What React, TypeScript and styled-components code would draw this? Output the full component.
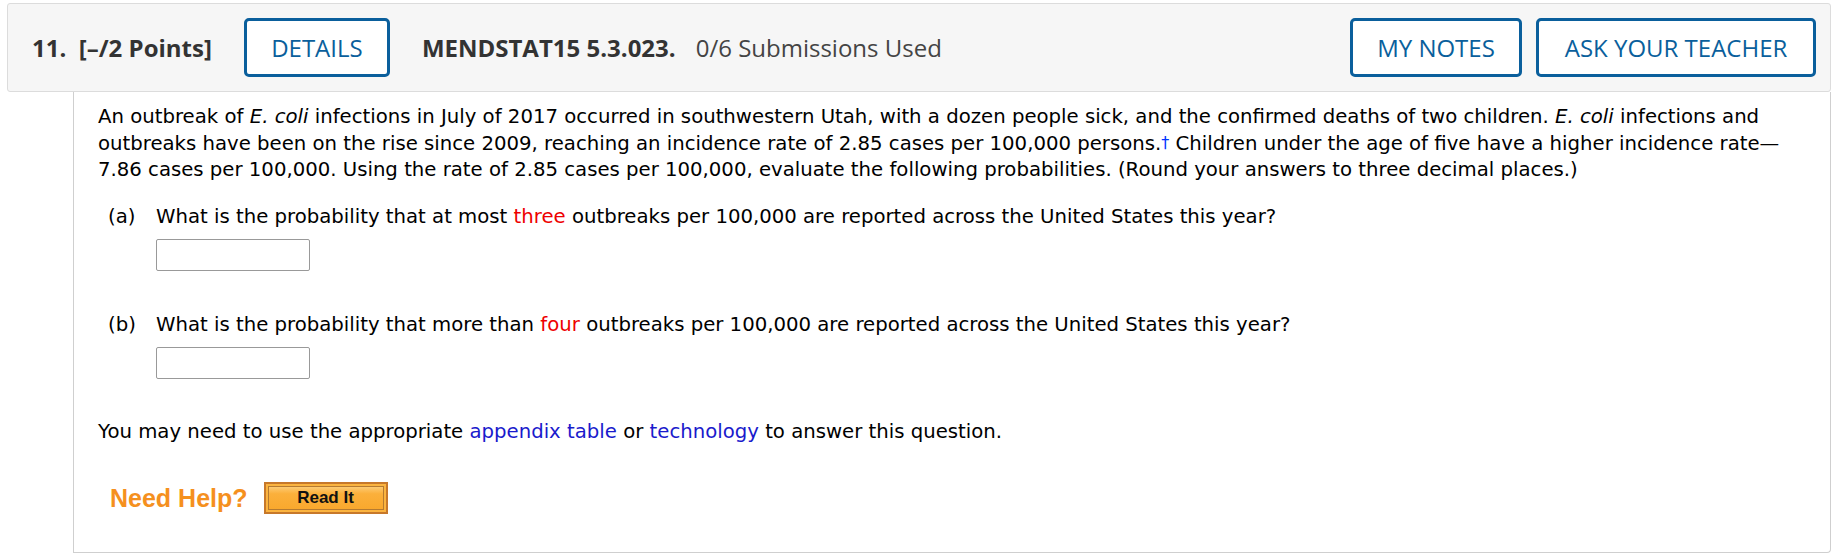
import styled, { createGlobalStyle } from 'styled-components';

const GlobalStyle = createGlobalStyle`
  body {
    margin: 0;
    background: #fff;
  }
`;

const Page = styled.div`
  padding: 3px 8px 0 7px;
`;

const Header = styled.div`
  display: flex;
  align-items: center;
  height: 87px;
  padding: 0 14px 0 24px;
  background-color: #f6f6f6;
  border: 1px solid #dcdcdc;
  border-radius: 3px;
  font-family: "Open Sans", sans-serif;
  font-size: 24px;
  color: #333;
`;

const Number = styled.span`
  font-weight: 700;
  white-space: pre;
`;

const Code = styled.span`
  font-weight: 700;
  margin-right: 20px;
`;

const Used = styled.span`
  font-weight: 400;
  color: #444;
`;

const Spacer = styled.div`
  flex: 1;
`;

const HeaderButton = styled.button<{ $width: number; $gap?: number }>`
  width: ${({ $width }) => $width}px;
  height: 59px;
  margin: 0 ${({ $gap }) => $gap ?? 0}px;
  background: #fff;
  border: 3px solid #0a5f9c;
  border-radius: 5px;
  color: #0a5f9c;
  font-family: "Open Sans", sans-serif;
  font-size: 24px;
  font-weight: 500;
  padding: 0;
  cursor: pointer;
`;

const Body = styled.div`
  margin-left: 66px;
  padding: 12px 38px 38px 24px;
  border-left: 1px solid #cfcfcf;
  border-right: 1px solid #cfcfcf;
  border-bottom: 1px solid #cfcfcf;
  border-bottom-right-radius: 4px;
  font-family: Verdana, "DejaVu Sans", sans-serif;
  font-size: 19.7px;
  line-height: 26px;
  color: #000;
`;

const Para = styled.p`
  margin: 0;
`;

const NoWrap = styled.span`
  white-space: nowrap;
`;

const Dagger = styled.span`
  color: #0033ff;
  font-size: 16px;
  vertical-align: 2px;
`;

const Red = styled.span`
  color: #ee0000;
`;

const Link = styled.a`
  color: #1a1acc;
  text-decoration: none;
`;

const Part = styled.div<{ $top: number }>`
  display: grid;
  grid-template-columns: 48px 1fr;
  margin-top: ${({ $top }) => $top}px;
  padding-left: 10px;
`;

const Label = styled.span``;

const Answer = styled.input`
  display: block;
  box-sizing: border-box;
  width: 154px;
  height: 32px;
  margin-top: 9px;
  border: 1px solid #999;
  border-radius: 2px;
  background: #fff;
`;

const Note = styled.p`
  margin: 40px 0 0 0;
`;

const HelpRow = styled.div`
  display: flex;
  align-items: center;
  margin-top: 37px;
  padding-left: 12px;
`;

const HelpText = styled.span`
  font-family: "Liberation Sans", Arial, sans-serif;
  font-size: 25px;
  line-height: 32px;
  font-weight: 700;
  color: #f5901e;
  margin-right: 16px;
`;

const ReadIt = styled.button`
  width: 124px;
  height: 32px;
  padding: 0;
  border: 2px solid #c7782a;
  background: linear-gradient(#fed58a, #fbb03b 35%, #f9a72b);
  box-shadow: inset 0 0 0 2px #fbb440, inset 0 0 0 3px #b57a30;
  font-family: "Liberation Sans", Arial, sans-serif;
  font-size: 17px;
  font-weight: 700;
  color: #111;
  cursor: pointer;
`;

export default function App() {
  return (
    <Page>
      <GlobalStyle />
      <Header>
        <Number>{'11.  [–/2 Points]'}</Number>
        <HeaderButton $width={146} $gap={32}>DETAILS</HeaderButton>
        <Code>MENDSTAT15 5.3.023.</Code>
        <Used>0/6 Submissions Used</Used>
        <Spacer />
        <HeaderButton $width={172}>MY NOTES</HeaderButton>
        <HeaderButton $width={280} style={{ marginLeft: 14 }}>ASK YOUR TEACHER</HeaderButton>
      </Header>

      <Body>
        <Para>
          An outbreak of <i>E. coli</i> infections in July of 2017 occurred in southwestern Utah, with a dozen
          people sick, and the confirmed deaths of two children. <i>E. coli</i> infections and outbreaks have
          been on the rise since 2009, reaching an incidence rate of 2.85 cases per 100,000 persons.
          <Dagger>†</Dagger> Children under the age of five have a higher incidence <NoWrap>rate—</NoWrap>
          <wbr />7.86 cases per 100,000. Using the rate of 2.85 cases per 100,000, evaluate the following
          probabilities. (Round your answers to three decimal places.)
        </Para>

        <Part $top={21}>
          <Label>(a)</Label>
          <div>
            What is the probability that at most <Red>three</Red> outbreaks per 100,000 are reported across the
            United States this year?
            <Answer type="text" />
          </div>
        </Part>

        <Part $top={41}>
          <Label>(b)</Label>
          <div>
            What is the probability that more than <Red>four</Red> outbreaks per 100,000 are reported across
            the United States this year?
            <Answer type="text" />
          </div>
        </Part>

        <Note>
          You may need to use the appropriate <Link href="#">appendix table</Link> or{' '}
          <Link href="#">technology</Link> to answer this question.
        </Note>

        <HelpRow>
          <HelpText>Need Help?</HelpText>
          <ReadIt>Read It</ReadIt>
        </HelpRow>
      </Body>
    </Page>
  );
}
